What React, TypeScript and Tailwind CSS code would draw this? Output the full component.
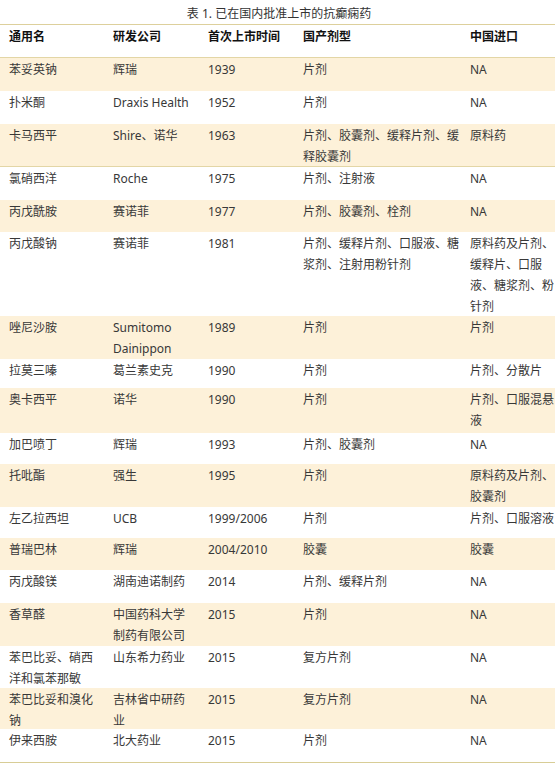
type Row = { cells: string[]; h: string; shade: boolean; line?: boolean };

const ROWS: Row[] = [
  { cells: ["苯妥英钠", "辉瑞", "1939", "片剂", "NA"], h: "h-[34px]", shade: true, line: true },
  { cells: ["扑米酮", "Draxis Health", "1952", "片剂", "NA"], h: "h-[33px]", shade: false },
  { cells: ["卡马西平", "Shire、诺华", "1963", "片剂、胶囊剂、缓释片剂、缓释胶囊剂", "原料药"], h: "h-[42px]", shade: true },
  { cells: ["氯硝西洋", "Roche", "1975", "片剂、注射液", "NA"], h: "h-[34px]", shade: false, line: true },
  { cells: ["丙戊酰胺", "赛诺菲", "1977", "片剂、胶囊剂、栓剂", "NA"], h: "h-[32px]", shade: true },
  { cells: ["丙戊酸钠", "赛诺菲", "1981", "片剂、缓释片剂、口服液、糖浆剂、注射用粉针剂", "原料药及片剂、缓释片、口服液、糖浆剂、粉针剂"], h: "h-[84px]", shade: false },
  { cells: ["唑尼沙胺", "Sumitomo Dainippon", "1989", "片剂", "片剂"], h: "h-[43px]", shade: true },
  { cells: ["拉莫三嗪", "葛兰素史克", "1990", "片剂", "片剂、分散片"], h: "h-[29px]", shade: false },
  { cells: ["奥卡西平", "诺华", "1990", "片剂", "片剂、口服混悬液"], h: "h-[45px]", shade: true },
  { cells: ["加巴喷丁", "辉瑞", "1993", "片剂、胶囊剂", "NA"], h: "h-[31px]", shade: false },
  { cells: ["托吡酯", "强生", "1995", "片剂", "原料药及片剂、胶囊剂"], h: "h-[43px]", shade: true },
  { cells: ["左乙拉西坦", "UCB", "1999/2006", "片剂", "片剂、口服溶液"], h: "h-[31px]", shade: false },
  { cells: ["普瑞巴林", "辉瑞", "2004/2010", "胶囊", "胶囊"], h: "h-[32px]", shade: true },
  { cells: ["丙戊酸镁", "湖南迪诺制药", "2014", "片剂、缓释片剂", "NA"], h: "h-[33px]", shade: false },
  { cells: ["香草醛", "中国药科大学制药有限公司", "2015", "片剂", "NA"], h: "h-[43px]", shade: true },
  { cells: ["苯巴比妥、硝西洋和氯苯那敏", "山东希力药业", "2015", "复方片剂", "NA"], h: "h-[42px]", shade: false },
  { cells: ["苯巴比妥和溴化钠", "吉林省中研药业", "2015", "复方片剂", "NA"], h: "h-[41px]", shade: true },
  { cells: ["伊来西胺", "北大药业", "2015", "片剂", "NA"], h: "h-[33px]", shade: false },
];

const COLS = "grid grid-cols-[104px_95px_95px_167px_94px]";
const CELL = [
  "pl-[9px] pr-[8px]",
  "pl-[9px] pr-[10px]",
  "pl-[9px] pr-[4px]",
  "pl-[9px] pr-[1px]",
  "pl-[9px]",
];

export default function App() {
  return (
    <div
      className="w-[558px] h-[765px] bg-white text-[12px] leading-[21px] text-[#383838] overflow-hidden"
      style={{ fontFamily: "'Noto Sans', 'Noto Sans CJK SC', sans-serif" }}
    >
      <div className="h-[24px] pt-[3px] text-center text-[#333]">表 1. 已在国内批准上市的抗癫痫药</div>

      <div className="w-[555px] border-t border-[#ddd09c]">
        <div className={`${COLS} h-[32px] pt-[1px] font-bold text-[#111]`}>
          {["通用名", "研发公司", "首次上市时间", "国产剂型", "中国进口"].map((t, i) => (
            <div key={t} className={CELL[i]}>
              {t}
            </div>
          ))}
        </div>

        {ROWS.map((r, idx) => (
          <div
            key={idx}
            className={`${COLS} ${r.h} pt-[1px] ${r.shade ? "bg-[#fdf1d9]" : "bg-white"} ${
              r.line ? "border-t border-[#e3d6a6]" : ""
            }`}
          >
            {r.cells.map((c, i) => (
              <div key={i} className={`${CELL[i]} break-words`}>
                {c}
              </div>
            ))}
          </div>
        ))}

        <div className="border-t border-[#d8cd96]" />
      </div>
    </div>
  );
}
